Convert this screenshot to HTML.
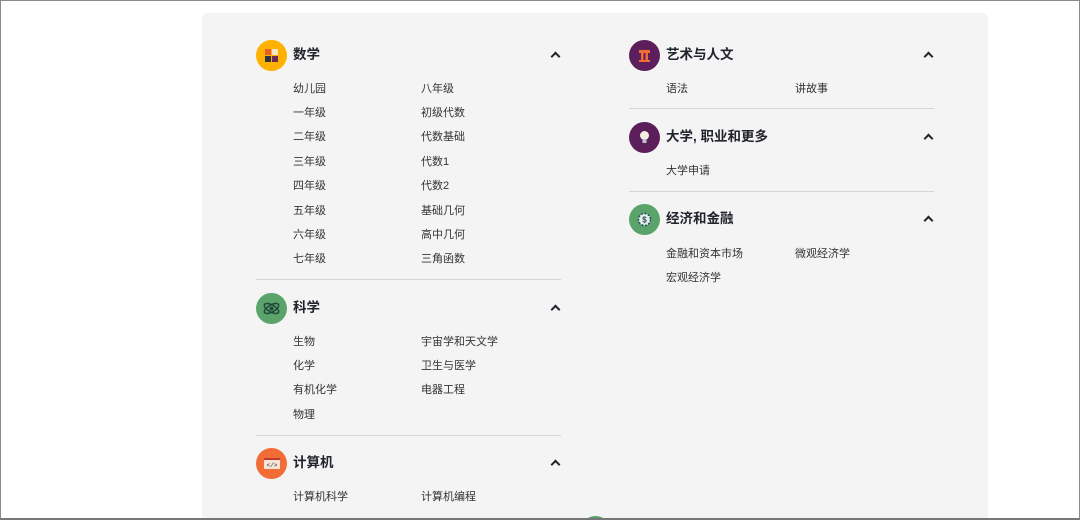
<!DOCTYPE html>
<html style="width:1080px;height:520px;overflow:hidden"><head><meta charset="utf-8"><style>
*{margin:0;padding:0;box-sizing:border-box}
body{width:1080px;height:520px;background:#fff;position:relative;overflow:hidden;font-family:"Liberation Sans","Noto Sans CJK SC",sans-serif;color:#21242c}
.frame{position:absolute;left:0;top:0;width:1080px;height:520px;border:1px solid #8a8a8a;border-bottom:2px solid #777;pointer-events:none;z-index:5}
.panel{position:absolute;left:202px;top:13px;width:786px;height:507px;background:#f4f4f4;border-radius:6px 6px 0 0}
.ic{position:absolute;width:31px;height:31px;border-radius:50%;overflow:hidden}
.h{position:absolute;font-size:13.5px;font-weight:bold;line-height:20px}
.it{position:absolute;font-size:11px;color:#333;line-height:16px}
.hr{position:absolute;height:1px;background:#d6d6d6}
.chev{position:absolute;width:7px;height:7px;border-left:2px solid #21242c;border-top:2px solid #21242c;transform:rotate(45deg)}
</style></head><body>
<div class="panel"></div>

<div class="ic" style="left:256px;top:40px;background:#ffb100"><svg width="31" height="31"><rect x="9" y="9" width="6" height="6" fill="#e85d2a"/><rect x="16" y="9" width="6" height="6" fill="#f8e7c0"/><rect x="9" y="16" width="6" height="6" fill="#2a3346"/><rect x="16" y="16" width="6" height="6" fill="#6b2a55"/></svg></div>
<div class="h" style="left:293px;top:45px">数学</div>
<div class="chev" style="left:552px;top:53px"></div>
<div class="it" style="left:293px;top:81px">幼儿园</div><div class="it" style="left:421px;top:81px">八年级</div>
<div class="it" style="left:293px;top:105px">一年级</div><div class="it" style="left:421px;top:105px">初级代数</div>
<div class="it" style="left:293px;top:129px">二年级</div><div class="it" style="left:421px;top:129px">代数基础</div>
<div class="it" style="left:293px;top:154px">三年级</div><div class="it" style="left:421px;top:154px">代数1</div>
<div class="it" style="left:293px;top:178px">四年级</div><div class="it" style="left:421px;top:178px">代数2</div>
<div class="it" style="left:293px;top:203px">五年级</div><div class="it" style="left:421px;top:203px">基础几何</div>
<div class="it" style="left:293px;top:227px">六年级</div><div class="it" style="left:421px;top:227px">高中几何</div>
<div class="it" style="left:293px;top:251px">七年级</div><div class="it" style="left:421px;top:251px">三角函数</div>
<div class="hr" style="left:256px;top:279px;width:305px"></div>

<div class="ic" style="left:256px;top:293px;background:#5aa36b"><svg width="31" height="31"><ellipse cx="15.5" cy="15.5" rx="8" ry="3.5" fill="none" stroke="#1f4a3a" stroke-width="1.5" transform="rotate(30 15.5 15.5)"/><ellipse cx="15.5" cy="15.5" rx="8" ry="3.5" fill="none" stroke="#1f4a3a" stroke-width="1.5" transform="rotate(-30 15.5 15.5)"/><circle cx="15.5" cy="15.5" r="2" fill="#1f4a3a"/></svg></div>
<div class="h" style="left:293px;top:298px">科学</div>
<div class="chev" style="left:552px;top:306px"></div>
<div class="it" style="left:293px;top:334px">生物</div><div class="it" style="left:421px;top:334px">宇宙学和天文学</div>
<div class="it" style="left:293px;top:358px">化学</div><div class="it" style="left:421px;top:358px">卫生与医学</div>
<div class="it" style="left:293px;top:382px">有机化学</div><div class="it" style="left:421px;top:382px">电器工程</div>
<div class="it" style="left:293px;top:407px">物理</div>
<div class="hr" style="left:256px;top:435px;width:305px"></div>

<div class="ic" style="left:256px;top:448px;background:#f26c36"><svg width="31" height="31"><rect x="8" y="10" width="16" height="11" fill="#f6e4d8"/><rect x="8" y="10" width="16" height="2" fill="#c0392b"/><text x="16" y="19" font-size="6" text-anchor="middle" fill="#333" font-family="Liberation Mono">&lt;/&gt;</text></svg></div>
<div class="h" style="left:293px;top:453px">计算机</div>
<div class="chev" style="left:552px;top:461px"></div>
<div class="it" style="left:293px;top:489px">计算机科学</div><div class="it" style="left:421px;top:489px">计算机编程</div>

<div class="ic" style="left:629px;top:40px;background:#5c1f5b"><svg width="31" height="31"><rect x="10" y="10" width="11" height="3" fill="#f26c36"/><rect x="12" y="13" width="2.5" height="7" fill="#f26c36"/><rect x="16.5" y="13" width="2.5" height="7" fill="#f26c36"/><rect x="10" y="20" width="11" height="2" fill="#f26c36"/></svg></div>
<div class="h" style="left:666px;top:45px">艺术与人文</div>
<div class="chev" style="left:925px;top:53px"></div>
<div class="it" style="left:666px;top:81px">语法</div><div class="it" style="left:795px;top:81px">讲故事</div>
<div class="hr" style="left:629px;top:108px;width:305px"></div>

<div class="ic" style="left:629px;top:122px;background:#5c1f5b"><svg width="31" height="31"><circle cx="15.5" cy="13.5" r="4.5" fill="#f4f0e0"/><rect x="13.5" y="17" width="4" height="4" fill="#b8c6d6"/></svg></div>
<div class="h" style="left:666px;top:127px">大学, 职业和更多</div>
<div class="chev" style="left:925px;top:135px"></div>
<div class="it" style="left:666px;top:163px">大学申请</div>
<div class="hr" style="left:629px;top:191px;width:305px"></div>

<div class="ic" style="left:629px;top:204px;background:#5aa36b"><svg width="31" height="31"><circle cx="15.5" cy="15.5" r="6" fill="#e8f0ea" stroke="#1f4a5a" stroke-width="1.5" stroke-dasharray="2 1.5"/><text x="15.5" y="18.5" font-size="8" font-weight="bold" text-anchor="middle" fill="#1f4a5a" font-family="Liberation Sans">$</text></svg></div>
<div class="h" style="left:666px;top:209px">经济和金融</div>
<div class="chev" style="left:925px;top:217px"></div>
<div class="it" style="left:666px;top:246px">金融和资本市场</div><div class="it" style="left:795px;top:246px">微观经济学</div>
<div class="it" style="left:666px;top:270px">宏观经济学</div>

<div style="position:absolute;left:580px;top:516px;width:31px;height:4px;overflow:hidden"><div style="width:31px;height:31px;border-radius:50%;background:#5aa36b"></div></div>
<div class="frame"></div>
</body></html>
